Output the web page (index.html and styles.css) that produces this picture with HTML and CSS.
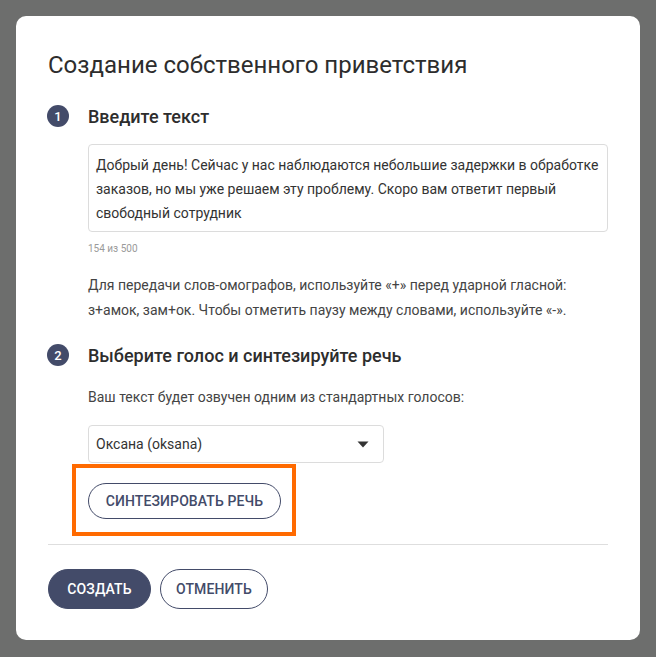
FILE: index.html
```html
<!DOCTYPE html>
<html lang="ru">
<head>
<meta charset="utf-8">
<link rel="stylesheet" href="styles.css">
</head>
<body>
<div class="modal">
  <h1 class="title">Создание собственного приветствия</h1>

  <div class="step">
    <span class="badge">1</span>
    <span class="step-title">Введите текст</span>
  </div>
  <div class="step-body">
    <div class="textarea">Добрый день! Сейчас у нас наблюдаются небольшие задержки в обработке заказов, но мы уже решаем эту проблему. Скоро вам ответит первый свободный сотрудник</div>
    <div class="counter">154 из 500</div>
    <p class="hint">Для передачи слов-омографов, используйте «+» перед ударной гласной: з+амок, зам+ок. Чтобы отметить паузу между словами, используйте «-».</p>
  </div>

  <div class="step step2">
    <span class="badge">2</span>
    <span class="step-title">Выберите голос и синтезируйте речь</span>
  </div>
  <div class="step-body">
    <p class="desc">Ваш текст будет озвучен одним из стандартных голосов:</p>
    <div class="select">
      <span>Оксана (oksana)</span>
      <svg class="caret" width="12" height="7" viewBox="0 0 12 7"><path d="M0.5 0.5h11L6 6.5z" fill="#333"/></svg>
    </div>
    <div class="highlight">
      <button class="btn btn-outline">СИНТЕЗИРОВАТЬ РЕЧЬ</button>
    </div>
  </div>

  <div class="divider"></div>

  <div class="actions">
    <button class="btn btn-primary">СОЗДАТЬ</button>
    <button class="btn btn-outline">ОТМЕНИТЬ</button>
  </div>
</div>
</body>
</html>
```

FILE: styles.css
```css
* { box-sizing: border-box; }
html, body { margin: 0; padding: 0; }
body {
  background: #6d6e6d;
  padding: 16px;
  font-family: Roboto, "Liberation Sans", sans-serif;
  color: #333;
}
.modal {
  background: #fff;
  border-radius: 10px;
  width: 624px;
  height: 624px;
  padding: 32px 32px 32px 32px;
}
.title {
  margin: 0;
  font-size: 24px;
  line-height: 34px;
  font-weight: 400;
  color: #2d2d2d;
}
.step {
  display: flex;
  align-items: center;
  height: 24px;
  margin-top: 22px;
}
.step2 { margin-top: 20px; }
.badge {
  width: 22px;
  height: 22px;
  border-radius: 50%;
  background: #434b69;
  color: #fff;
  font-size: 13px;
  font-weight: 500;
  display: flex;
  align-items: center;
  justify-content: center;
  margin-left: -1px;
  margin-right: 19px;
}
.step-title {
  font-size: 18px;
  font-weight: 500;
  color: #2d2d2d;
}
.step-body {
  padding-left: 40px;
}
.textarea {
  margin-top: 16px;
  height: 88px;
  border: 1px solid #dcdcdc;
  border-radius: 4px;
  padding: 8px 7px;
  font-size: 14px;
  line-height: 24px;
  color: #333;
}
.counter {
  margin-top: 10px;
  font-size: 10px;
  line-height: 14px;
  color: #9a9a9a;
}
.hint {
  margin: 17px 0 0;
  font-size: 14px;
  line-height: 25px;
  color: #444;
}
.desc {
  margin: 20px 0 0;
  font-size: 14px;
  line-height: 20px;
  color: #444;
}
.select {
  margin-top: 18px;
  width: 296px;
  height: 38px;
  border: 1px solid #dcdcdc;
  border-radius: 4px;
  display: flex;
  align-items: center;
  justify-content: space-between;
  padding: 0 14px 0 7px;
  font-size: 14px;
  color: #333;
}
.highlight {
  margin: 1px 0 0 -16px;
  width: 224px;
  height: 72px;
  border: 4px solid #ff6a00;
  padding: 15px 0 0 12px;
}
.btn {
  font-family: Roboto, "Liberation Sans", sans-serif;
  font-size: 14px;
  font-weight: 500;
  border-radius: 20px;
  cursor: pointer;
  letter-spacing: 0.1px;
}
.highlight .btn {
  height: 36px;
  width: 193px;
  padding: 0;
}
.btn-outline {
  background: #fff;
  color: #434b69;
  border: 1px solid #434b69;
}
.btn-primary {
  background: #434b69;
  color: #fff;
  border: 1px solid #434b69;
}
.divider {
  margin-top: 8px;
  height: 1px;
  background: #dedede;
}
.actions {
  margin-top: 24px;
  display: flex;
  gap: 9px;
}
.actions .btn {
  height: 40px;
}
.actions .btn-primary { width: 103px; padding: 0; }
.actions .btn-outline { width: 108px; padding: 0; }
```
